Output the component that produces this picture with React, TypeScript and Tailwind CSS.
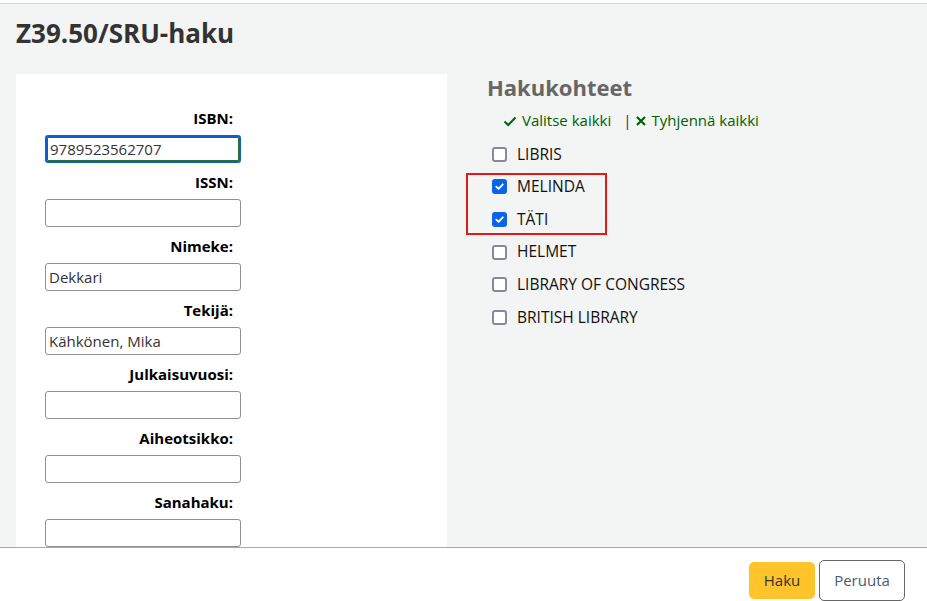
import React from "react";

const fields = [
  { label: "ISBN:", value: "9789523562707", focus: true },
  { label: "ISSN:", value: "" },
  { label: "Nimeke:", value: "Dekkari" },
  { label: "Tekijä:", value: "Kähkönen, Mika" },
  { label: "Julkaisuvuosi:", value: "" },
  { label: "Aiheotsikko:", value: "" },
  { label: "Sanahaku:", value: "" },
];

const targets = [
  { name: "LIBRIS", checked: false },
  { name: "MELINDA", checked: true },
  { name: "TÄTI", checked: true },
  { name: "HELMET", checked: false },
  { name: "LIBRARY OF CONGRESS", checked: false },
  { name: "BRITISH LIBRARY", checked: false },
];

function Box({ checked }: { checked: boolean }) {
  if (checked) {
    return (
      <span className="flex h-[15px] w-[15px] items-center justify-center rounded-[3px] bg-[#0b63e5]">
        <svg width="11" height="11" viewBox="0 0 12 12" fill="none">
          <path d="M2.5 6.2 5 8.6 9.6 3.6" stroke="white" strokeWidth="2" strokeLinecap="round" strokeLinejoin="round" />
        </svg>
      </span>
    );
  }
  return <span className="h-[15px] w-[15px] rounded-[3px] border-2 border-[#8a8a96] bg-white" />;
}

export default function App() {
  return (
    <div
      className="flex h-screen flex-col overflow-hidden bg-white text-[15px] text-[#111]"
      style={{ fontFamily: '"Open Sans", "Noto Sans", sans-serif' }}
    >
      <div className="h-[3px] shrink-0 bg-white" />
      <div className="flex min-h-0 flex-1 flex-col overflow-hidden border-t border-[#d4d4d8] bg-[#f3f4f4]">
        <h1 className="ml-4 mt-[13px] text-[26px] font-bold leading-[32px] text-[#333]">Z39.50/SRU-haku</h1>
        <div className="mt-[25px] flex min-h-0 flex-1">
          <div className="ml-4 w-[431px] shrink-0 bg-white pl-[29px] pt-[34px]">
            <div className="w-[196px]">
              {fields.map((f) => (
                <div key={f.label} className="mb-[9px]">
                  <div className="pr-[8px] text-right font-bold leading-[20px] text-black">{f.label}</div>
                  <div
                    className={
                      "mt-[7px] flex h-[28px] items-center rounded-[3px] px-[3px] text-[#333] " +
                      (f.focus
                        ? "border-2 border-[#0b5fd1] shadow-[inset_0_0_0_1px_#2f6b2f]"
                        : "border border-[#8f8f9d]")
                    }
                  >
                    {f.value}
                  </div>
                </div>
              ))}
            </div>
          </div>
          <div className="pl-[40px]">
            <h2 className="text-[22px] font-bold leading-[26px] text-[#666]">Hakukohteet</h2>
            <div className="ml-[16px] mt-[10px] flex h-[21px] items-center text-[#006100]">
              <svg width="14" height="14" viewBox="0 0 14 14" fill="none" className="mr-[5px]">
                <path d="M1.5 7.5 5.2 11 12.5 3.5" stroke="#006100" strokeWidth="2" />
              </svg>
              <span>Valitse kaikki</span>
              <span className="ml-[12px] mr-[4px] text-[#333]">|</span>
              <svg width="12" height="12" viewBox="0 0 12 12" fill="none" className="mr-[4px]">
                <path d="M2 2 10 10M10 2 2 10" stroke="#006100" strokeWidth="2.2" />
              </svg>
              <span>Tyhjennä kaikki</span>
            </div>
            <div className="relative mt-[7px] flex flex-col text-[15.5px]">
              {targets.map((t) => (
                <div key={t.name} className="flex h-[32.6px] items-center pl-[5px]">
                  <Box checked={t.checked} />
                  <span className="ml-[10px] text-[#111]">{t.name}</span>
                </div>
              ))}
              <div className="pointer-events-none absolute left-[-21px] top-[35px] h-[62px] w-[141px] border-2 border-[#e81717]" />
            </div>
          </div>
        </div>
      </div>
      <div className="flex h-[54px] shrink-0 items-start justify-end gap-[4px] border-t border-[#a8a8a8] bg-white pr-[22px] pt-[12px]">
        <button className="mt-[2px] h-[37px] w-[66px] rounded-[5px] bg-[#ffc32b] text-[#333]">Haku</button>
        <button className="h-[41px] w-[86px] rounded-[5px] border border-[#666] bg-white text-[#4a5a6e]">Peruuta</button>
      </div>
    </div>
  );
}
